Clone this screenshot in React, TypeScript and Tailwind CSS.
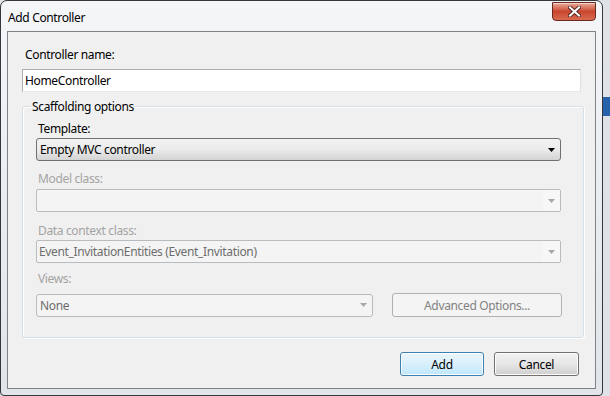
import React from "react";

const Arrow = ({ color }: { color: string }) => (
  <svg width="7" height="4" viewBox="0 0 7 4">
    <polygon points="0,0 7,0 3.5,4" fill={color} />
  </svg>
);

const CloseButton = () => (
  <div className="mt-[1px] flex h-[19px] w-[44px] items-center justify-center rounded-b-[4px] border border-[#6b2a20] bg-gradient-to-b from-[#e9a99b] via-[#c9452d] to-[#d76b51] shadow-[inset_0_1px_0_rgba(255,255,255,0.5)]">
    <svg width="13" height="11" viewBox="0 0 13 11">
      <path d="M2 1.5 L11 9.5 M11 1.5 L2 9.5" stroke="#5a2a22" strokeWidth="4" strokeLinecap="square" />
      <path d="M2 1.5 L11 9.5 M11 1.5 L2 9.5" stroke="#ffffff" strokeWidth="2" strokeLinecap="square" />
    </svg>
  </div>
);

const DisabledCombo = ({ value, width }: { value?: string; width: string }) => (
  <div className={`flex h-[23px] ${width} items-stretch rounded-[2px] border border-[#b9bcbf] bg-[#f4f4f4]`}>
    <div className="flex flex-1 items-center pl-[2px] text-[#6d6d6d]">{value}</div>
    <div className="flex w-[17px] items-center justify-center bg-[#f7f7f7]">
      <Arrow color="#a8a8a8" />
    </div>
  </div>
);

export default function App() {
  return (
    <div className="flex h-[396px] w-[610px] bg-[#dfe3e7] font-['Noto_Sans',sans-serif] text-[12px] leading-[15px] tracking-[-0.35px] text-black">
      <div className="flex h-[396px] w-[603px] flex-col rounded-t-[7px] rounded-b-[4px] border border-[#34383c] bg-gradient-to-b from-[#f4f6f8] to-[#e1e5e9] px-[6px] pb-[6px]">
        {/* title bar */}
        <div className="flex h-[30px] items-start justify-between">
          <span className="ml-[1px] mt-[9px]">Add Controller</span>
          <CloseButton />
        </div>

        {/* dialog body */}
        <div className="flex flex-1 flex-col border border-[#7d8389] bg-[#f0f0f0] pl-[14px]">
          <span className="mt-[15px] ml-[3px]">Controller name:</span>
          <div className="mt-[7px] flex h-[23px] w-[559px] items-center border border-[#abadb3] border-b-[#e3e9ef] border-r-[#dbdfe6] bg-white pl-[2px]">
            HomeController
          </div>

          <fieldset className="mt-[7px] w-[562px] rounded-[3px] border border-[#d5dfe5] shadow-[inset_1px_1px_0_#ffffff,1px_1px_0_#ffffff]">
            <legend className="ml-[8px] px-[1px]">Scaffolding options</legend>
            <div className="flex flex-col pb-[20px] pl-[13px]">
              <span className="mt-[7px] ml-[2px]">Template:</span>
              <div className="mt-[2px] flex h-[23px] w-[525px] items-center justify-between rounded-[3px] border border-[#707070] bg-gradient-to-b from-[#f2f2f2] via-[#ebebeb] to-[#d3d3d3] pl-[3px] pr-[5px]">
                <span>Empty MVC controller</span>
                <Arrow color="#000000" />
              </div>

              <span className="mt-[10px] ml-[2px] text-[#a3a3a3]">Model class:</span>
              <div className="mt-[3px]">
                <DisabledCombo width="w-[525px]" />
              </div>

              <span className="mt-[11px] ml-[2px] text-[#a3a3a3]">Data context class:</span>
              <div className="mt-[2px]">
                <DisabledCombo width="w-[525px]" value="Event_InvitationEntities (Event_Invitation)" />
              </div>

              <span className="mt-[8px] ml-[2px] text-[#a3a3a3]">Views:</span>
              <div className="mt-[7px] flex items-center gap-[19px]">
                <div className="flex h-[23px] w-[337px] items-center justify-between rounded-[3px] border border-[#b9bcbf] bg-[#f4f4f4] pl-[3px] pr-[5px]">
                  <span className="text-[#6d6d6d]">None</span>
                  <Arrow color="#a8a8a8" />
                </div>
                <div className="flex h-[24px] w-[170px] items-center justify-center rounded-[3px] border border-[#adb2b5] bg-[#f4f4f4] text-[#838383]">
                  Advanced Options...
                </div>
              </div>
            </div>
          </fieldset>

          <div className="mt-[14px] flex justify-end gap-[10px] pr-[16px]">
            <button className="flex h-[24px] w-[84px] items-center justify-center rounded-[3px] border border-[#3c7fb1] bg-gradient-to-b from-[#eaf6fd] via-[#d9f0fc] to-[#bee6fd] shadow-[inset_0_0_0_1px_#ffffff]">
              Add
            </button>
            <button className="flex h-[24px] w-[85px] items-center justify-center rounded-[3px] border border-[#707070] bg-gradient-to-b from-[#f2f2f2] via-[#e6e6e6] to-[#cfcfcf] shadow-[inset_0_0_0_1px_#fcfcfc]">
              Cancel
            </button>
          </div>
        </div>
      </div>

      {/* window behind, on the right */}
      <div className="flex flex-1 flex-col">
        <div className="mt-[97px] h-[19px] bg-[#2763ad]" />
      </div>
    </div>
  );
}
